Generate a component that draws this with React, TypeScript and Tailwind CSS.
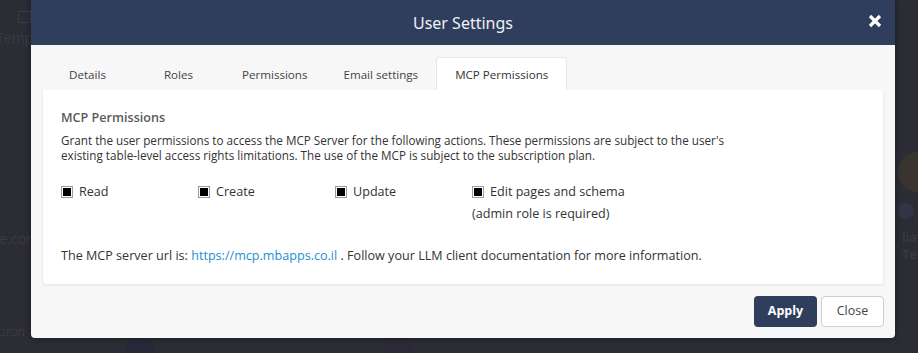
import React from "react";

function Box() {
  return (
    <span className="inline-flex items-center justify-center w-[12px] h-[12px] border border-[#8f9bb0] bg-white mr-[6px] shrink-0">
      <span className="block w-[8px] h-[8px] bg-black" />
    </span>
  );
}

function Check({ label, sub }: { label: string; sub?: string }) {
  return (
    <div className="w-[137px] shrink-0 whitespace-nowrap">
      <div className="flex items-center h-[18px]">
        <Box />
        <span>{label}</span>
      </div>
      {sub && <div className="mt-[4px] h-[18px] leading-[18px]">{sub}</div>}
    </div>
  );
}

export default function App() {
  const tabs = ["Details", "Roles", "Permissions", "Email settings"];
  return (
    <div
      className="relative w-[918px] h-[353px] overflow-hidden bg-[#2b2c34]"
      style={{ fontFamily: '"Open Sans", "Liberation Sans", sans-serif' }}
    >
      {/* faint page behind the overlay */}
      <div className="absolute left-[18px] top-[11px] w-[13px] h-[12px] border border-[#3b3c45]" />
      <div className="absolute left-[-4px] top-[27px] text-[14px] text-[#3a3b44]">Templ</div>
      <div className="absolute left-[-4px] top-[228px] text-[14px] text-[#3a3b44]">le.com</div>
      <div className="absolute left-[0px] top-[324px] text-[11px] text-[#3a3b44]">מכתב</div>
      <div className="absolute left-[898px] top-[152px] w-[40px] h-[40px] rounded-full bg-[#3a3430]" />
      <div className="absolute left-[898px] top-[203px] w-[16px] h-[16px] rounded-full bg-[#33334a]" />
      <div className="absolute left-[902px] top-[229px] text-[13px] font-semibold text-[#3a3b44] leading-[17px]">
        <div>liat</div>
        <div>Tel</div>
      </div>
      <div className="absolute left-[125px] top-[336px] w-[30px] h-[30px] rounded-full bg-[#25293a]" />
      <div className="absolute left-[384px] top-[336px] w-[30px] h-[30px] rounded-full bg-[#2b2838]" />

      <div className="relative ml-[31px] w-[864px] h-[338px] bg-[#f7f7f7] rounded-b-[4px] flex flex-col shadow-[0_0_6px_rgba(0,0,0,0.4)]">
        <div className="h-[45px] bg-[#2f3e5c] flex items-center justify-center relative shrink-0">
          <span className="text-[16px] text-[#eef1f6]" style={{ fontFamily: '"Noto Sans", "Open Sans", sans-serif' }}>User Settings</span>
          <svg className="absolute left-[837px] top-[14px]" width="14" height="14" viewBox="0 0 14 14">
            <path d="M2 2 L12 12 M12 2 L2 12" stroke="white" strokeWidth="3.2" strokeLinecap="butt" />
          </svg>
        </div>
        <div className="flex-1 px-[11px] pt-[12px] pb-[11px] flex flex-col">
          <div className="flex h-[33px] text-[11.6px] text-[#444]">
            {tabs.map((t) => (
              <div key={t} className="min-w-[91px] px-[18px] flex items-center justify-center pt-[2px]">
                {t}
              </div>
            ))}
            <div className="px-[18px] flex items-center justify-center bg-white border border-b-0 border-[#e6e6e6] rounded-t-[4px] text-[#333] pt-[2px]">
              MCP Permissions
            </div>
          </div>
          <div className="h-[195px] bg-white rounded-b-[4px] rounded-tr-[4px] border border-t-0 border-[#ececec] shadow-[0_1px_2px_rgba(0,0,0,0.06)] px-[18px] pt-[18px] text-[12.6px] text-[#333]">
            <div className="text-[12.6px] font-semibold text-[#5a5a5a] leading-[20px]">MCP Permissions</div>
            <div className="mt-[5px] text-[11.7px] leading-[15px] max-w-[672px]">
              Grant the user permissions to access the MCP Server for the following actions. These permissions are subject to the user's existing table-level access rights limitations. The use of the MCP is subject to the subscription plan.
            </div>
            <div className="flex mt-[20px]">
              <Check label="Read" />
              <Check label="Create" />
              <Check label="Update" />
              <Check label="Edit pages and schema" sub="(admin role is required)" />
            </div>
            <div className="mt-[24px] leading-[18px]">
              The MCP server url is: <span className="text-[#1d8fd3]">https://mcp.mbapps.co.il</span> . Follow your LLM client documentation for more information.
            </div>
          </div>
          <div className="flex justify-end gap-[4px] mt-[11px]">
            <button className="w-[63px] h-[31px] rounded-[4px] bg-[#2f3e5c] text-white text-[12.5px] font-bold">Apply</button>
            <button className="w-[63px] h-[31px] rounded-[4px] bg-white border border-[#cfcfcf] text-[#444] text-[12.5px]">Close</button>
          </div>
        </div>
      </div>
    </div>
  );
}
